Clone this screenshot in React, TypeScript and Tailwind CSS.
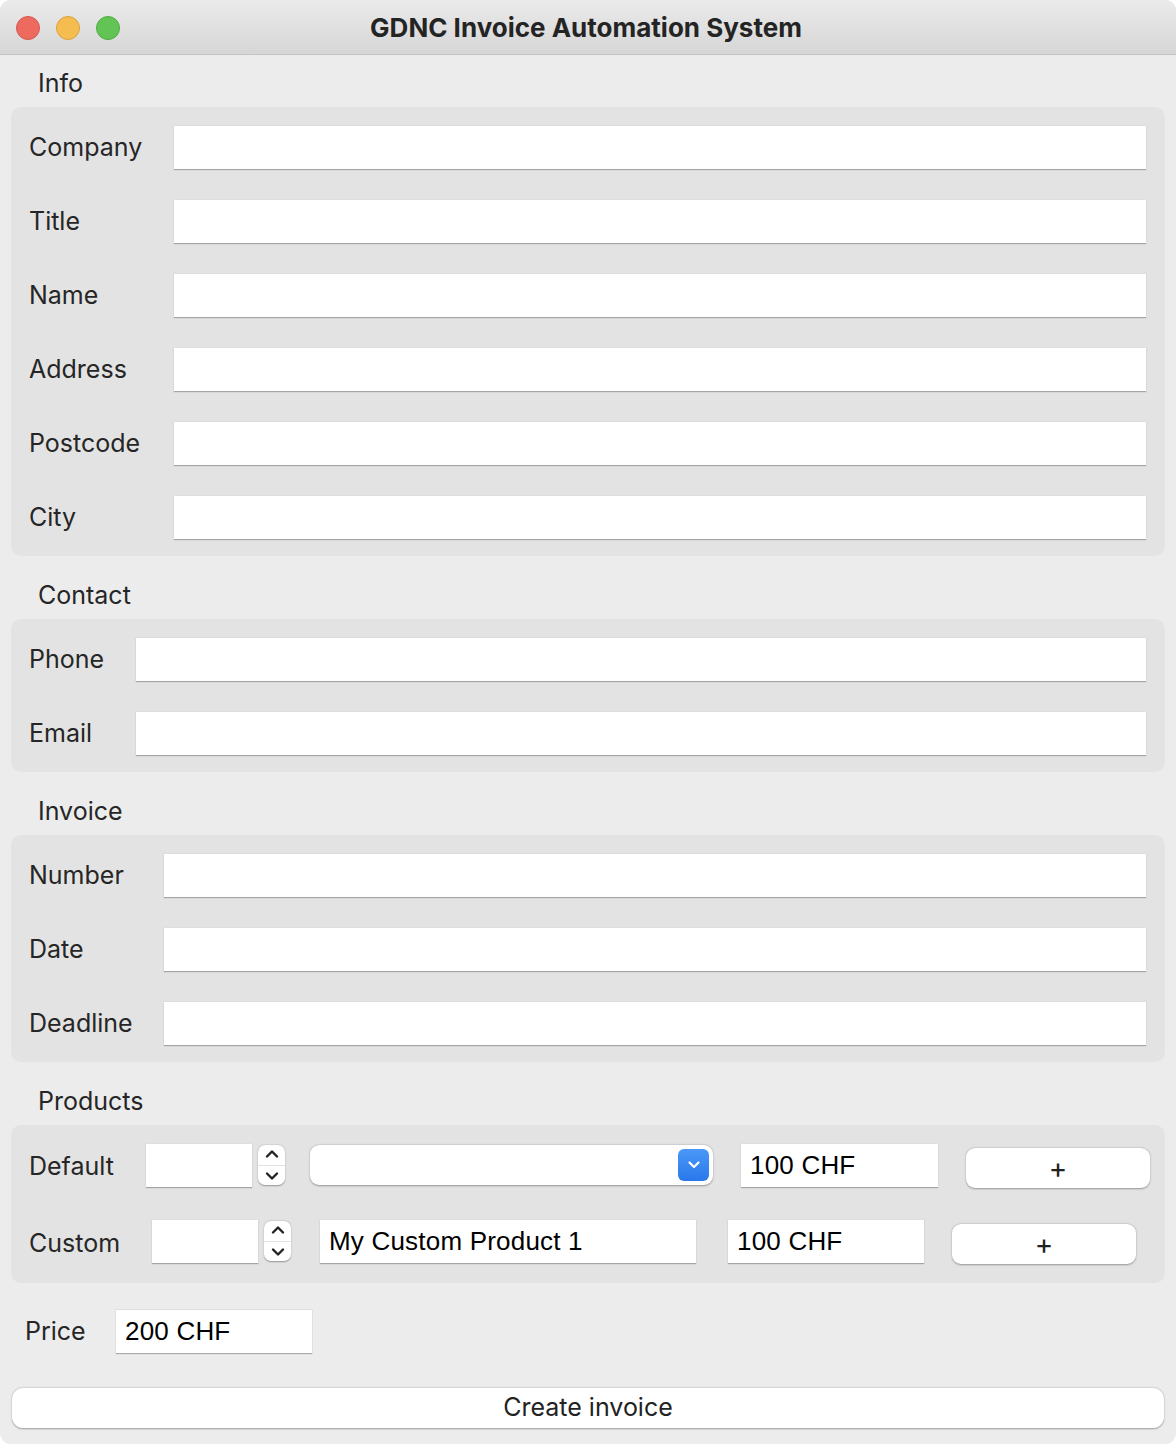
import React from 'react'

const sans = { fontFamily: 'Inter, "Noto Sans", sans-serif' }

type Group = {
  title: string
  labelWidth: string
  fields: string[]
}

const groups: Group[] = [
  { title: 'Info', labelWidth: 'w-[145px]', fields: ['Company', 'Title', 'Name', 'Address', 'Postcode', 'City'] },
  { title: 'Contact', labelWidth: 'w-[107px]', fields: ['Phone', 'Email'] },
  { title: 'Invoice', labelWidth: 'w-[135px]', fields: ['Number', 'Date', 'Deadline'] },
]

function Field({ value, className = '' }: { value?: string; className?: string }) {
  return (
    <div
      className={`h-[44px] bg-white border-t border-[#dedede] shadow-[0_1px_1px_rgba(0,0,0,0.28)] flex items-center px-[9px] text-[26px] tracking-[0.2px] text-black ${className}`}
      style={{ fontFamily: '"Liberation Sans", Arial, sans-serif' }}
    >
      {value}
    </div>
  )
}

function SectionTitle({ children }: { children: React.ReactNode }) {
  return (
    <div className="h-[63px] first:h-[52px] flex items-end pb-[9px] pl-[27px] text-[25px] leading-[29px] text-[#262626]">
      {children}
    </div>
  )
}

function Stepper() {
  return (
    <div className="w-[27px] h-[40px] rounded-[7px] bg-white shadow-[0_0.5px_1.5px_rgba(0,0,0,0.35)] flex flex-col items-center justify-between py-[3px]">
      <svg width="16" height="12" viewBox="0 0 16 12" fill="none">
        <path d="M3 8.5 L8 3.5 L13 8.5" stroke="#222" strokeWidth="2.4" strokeLinecap="round" strokeLinejoin="round" />
      </svg>
      <div className="w-full h-px bg-[#e2e2e2]" />
      <svg width="16" height="12" viewBox="0 0 16 12" fill="none">
        <path d="M3 3.5 L8 8.5 L13 3.5" stroke="#222" strokeWidth="2.4" strokeLinecap="round" strokeLinejoin="round" />
      </svg>
    </div>
  )
}

function PlusButton({ className = '' }: { className?: string }) {
  return (
    <div
      className={`w-[184px] h-[40px] rounded-[9px] bg-white shadow-[0_0.5px_2px_rgba(0,0,0,0.35)] flex items-center justify-center text-[28px] text-[#222] ${className}`}
    >
      +
    </div>
  )
}

export default function App() {
  return (
    <div className="w-[1176px] h-[1444px] bg-white" style={sans}>
      <div className="w-full h-full rounded-[11px] overflow-hidden bg-[#ececec] flex flex-col">
        {/* title bar */}
        <div className="relative h-[55px] shrink-0 bg-gradient-to-b from-[#ebebeb] to-[#d6d6d6] border-b border-[#c4c4c4] flex items-center justify-center">
          <div className="absolute left-[16px] top-[16px] flex gap-[16px]">
            <div className="w-[24px] h-[24px] rounded-full bg-[#ee6a5f] border border-[#d5574d]" />
            <div className="w-[24px] h-[24px] rounded-full bg-[#f5bd4f] border border-[#d9a23e]" />
            <div className="w-[24px] h-[24px] rounded-full bg-[#61c454] border border-[#4fac43]" />
          </div>
          <div className="text-[26px] font-bold text-[#242424] -ml-[4px]">GDNC Invoice Automation System</div>
        </div>

        <div className="px-[11px] flex flex-col">
          {groups.map((g) => (
            <React.Fragment key={g.title}>
              <SectionTitle>{g.title}</SectionTitle>
              <div className="rounded-[10px] bg-[#e3e3e3] pl-[18px] pr-[19px] pt-[18px] pb-[17px] flex flex-col gap-[30px]">
                {g.fields.map((f) => (
                  <div key={f} className="flex items-center">
                    <div className={`${g.labelWidth} shrink-0 pt-[2px] text-[25px] text-[#262626]`}>{f}</div>
                    <Field className="flex-1" />
                  </div>
                ))}
              </div>
            </React.Fragment>
          ))}

          <SectionTitle>Products</SectionTitle>
          <div className="rounded-[10px] bg-[#e3e3e3] pl-[18px] pt-[18px] pb-[20px] flex flex-col gap-[32px]">
            <div className="flex items-center h-[44px]">
              <div className="w-[117px] shrink-0 pt-[4px] text-[25px] text-[#262626]">Default</div>
              <Field className="w-[106px]" />
              <div className="ml-[6px]">
                <Stepper />
              </div>
              <div className="ml-[25px] w-[403px] h-[40px] rounded-[9px] bg-white shadow-[0_0.5px_2px_rgba(0,0,0,0.35)] flex items-center justify-end pr-[4px]">
                <div className="w-[31px] h-[32px] rounded-[6px] bg-gradient-to-b from-[#4b98f7] to-[#2a77ec] flex items-center justify-center">
                  <svg width="14" height="10" viewBox="0 0 14 10" fill="none">
                    <path d="M2.5 2.5 L7 7 L11.5 2.5" stroke="#fff" strokeWidth="2.2" strokeLinecap="round" strokeLinejoin="round" />
                  </svg>
                </div>
              </div>
              <Field value="100 CHF" className="ml-[28px] w-[197px]" />
              <PlusButton className="ml-[28px] mt-[6px]" />
            </div>
            <div className="flex items-center h-[44px]">
              <div className="w-[123px] shrink-0 pt-[6px] text-[25px] text-[#262626]">Custom</div>
              <Field className="w-[106px]" />
              <div className="ml-[6px]">
                <Stepper />
              </div>
              <Field value="My Custom Product 1" className="ml-[29px] w-[376px]" />
              <Field value="100 CHF" className="ml-[32px] w-[196px]" />
              <PlusButton className="ml-[28px] mt-[6px]" />
            </div>
          </div>

          <div className="mt-[26px] flex items-center pl-[14px]">
            <div className="w-[91px] pt-[2px] text-[25px] text-[#262626]">Price</div>
            <Field value="200 CHF" className="w-[196px]" />
          </div>

          <div className="mt-[35px] mx-[1px] h-[40px] rounded-[11px] bg-white shadow-[0_0.5px_2px_rgba(0,0,0,0.35)] flex items-center justify-center text-[25px] text-[#222]">
            Create invoice
          </div>
        </div>
      </div>
    </div>
  )
}
